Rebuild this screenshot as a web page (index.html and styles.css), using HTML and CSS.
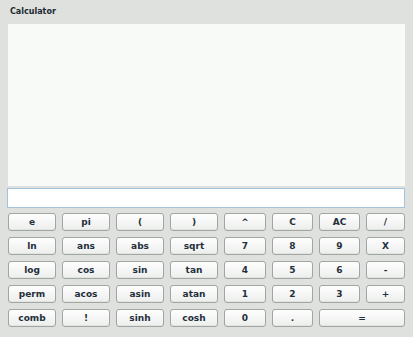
FILE: index.html
```html
<!DOCTYPE html>
<html>
<head>
<meta charset="utf-8">
<link rel="stylesheet" href="styles.css">
</head>
<body>
<div class="app">
  <div class="title">Calculator</div>
  <div class="display"></div>
  <div class="input"></div>
  <div class="keys">
    <button class="key">e</button>
    <button class="key">pi</button>
    <button class="key">(</button>
    <button class="key">)</button>
    <button class="key">^</button>
    <button class="key">C</button>
    <button class="key">AC</button>
    <button class="key">/</button>

    <button class="key">ln</button>
    <button class="key">ans</button>
    <button class="key">abs</button>
    <button class="key">sqrt</button>
    <button class="key">7</button>
    <button class="key">8</button>
    <button class="key">9</button>
    <button class="key">X</button>

    <button class="key">log</button>
    <button class="key">cos</button>
    <button class="key">sin</button>
    <button class="key">tan</button>
    <button class="key">4</button>
    <button class="key">5</button>
    <button class="key">6</button>
    <button class="key">-</button>

    <button class="key">perm</button>
    <button class="key">acos</button>
    <button class="key">asin</button>
    <button class="key">atan</button>
    <button class="key">1</button>
    <button class="key">2</button>
    <button class="key">3</button>
    <button class="key">+</button>

    <button class="key">comb</button>
    <button class="key">!</button>
    <button class="key">sinh</button>
    <button class="key">cosh</button>
    <button class="key">0</button>
    <button class="key">.</button>
    <button class="key wide">=</button>
  </div>
</div>
</body>
</html>
```
FILE: styles.css
```css
html, body {
  margin: 0;
  padding: 0;
}
body {
  background: #dfe1de;
  width: 413px;
  height: 337px;
  overflow: hidden;
  font-family: "DejaVu Sans", Verdana, sans-serif;
}
.app {
  padding: 0 8px 0 7px;
  display: flex;
  flex-direction: column;
}
.title {
  font-size: 8px;
  font-weight: bold;
  line-height: 10px;
  padding: 7px 0 7px 3px;
  color: #1b2a30;
}
.display {
  height: 162px;
  margin-left: 1px;
  background: #f7faf7;
}
.input {
  margin-top: 2px;
  height: 18px;
  border: 1px solid #a3c3dc;
  background: #ffffff;
}
.keys {
  margin-top: 5px;
  margin-left: 1px;
  display: grid;
  grid-template-columns: 48px 48px 48px 48px 42px 41px 41px 39px;
  grid-auto-rows: 18px;
  column-gap: 6px;
  row-gap: 6px;
}
.key {
  margin: 0;
  padding: 0;
  border: 1px solid #a2a6a2;
  border-radius: 3px;
  background: linear-gradient(#fefefe, #eceeec);
  box-shadow: inset 0 -1px 0 #e2e4e2;
  font-family: "DejaVu Sans", Verdana, sans-serif;
  font-size: 9px;
  font-weight: bold;
  color: #1f2f3c;
  line-height: 16px;
  text-align: center;
}
.wide {
  grid-column: span 2;
}
```
